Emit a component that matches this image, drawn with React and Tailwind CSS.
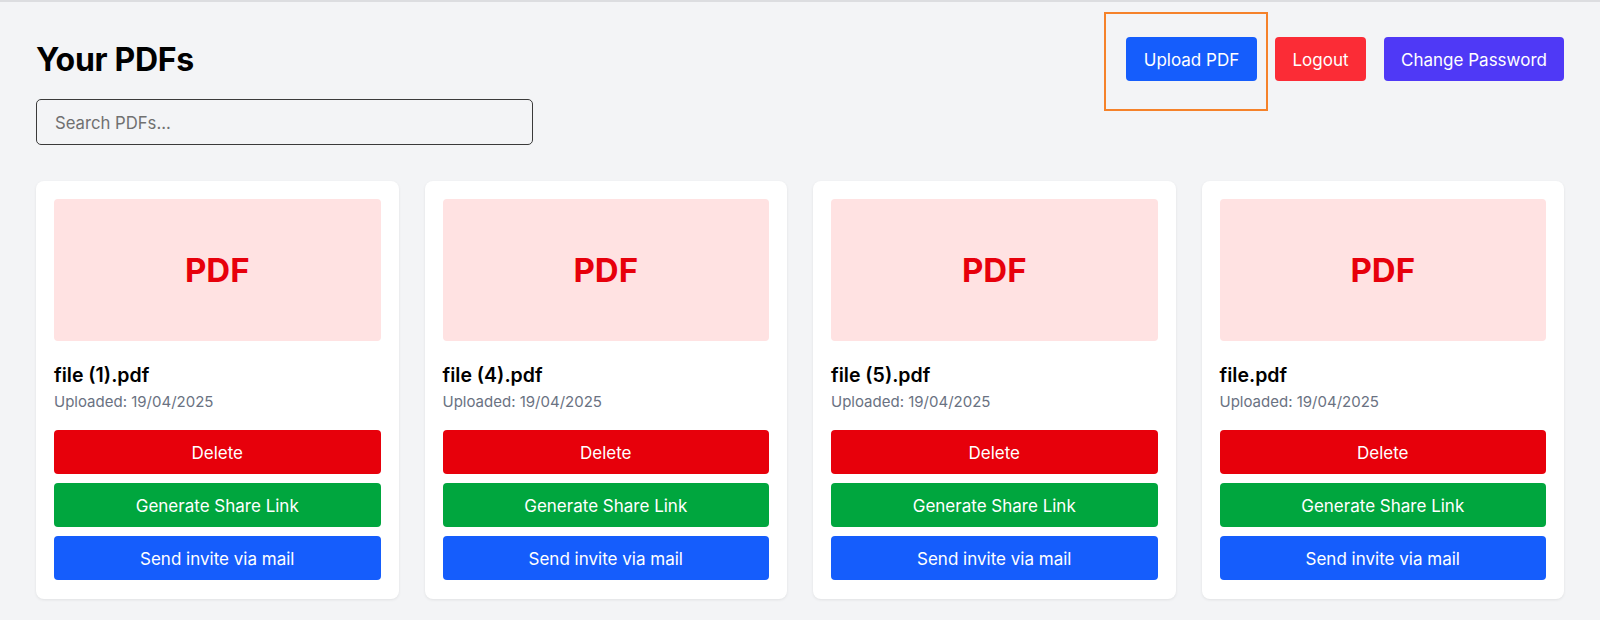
import React from "react";

const files = ["file (1).pdf", "file (4).pdf", "file (5).pdf", "file.pdf"];

function Card({ name }) {
  return (
    <div className="bg-white rounded-lg shadow-[0_1px_3px_rgba(0,0,0,0.08)] p-[18px] pb-[19px] flex flex-col">
      <div className="h-[142px] bg-[#ffe2e2] rounded-[4px] flex items-center justify-center">
        <span className="text-[33px] font-bold text-[#e7000b] leading-none">PDF</span>
      </div>
      <div className="mt-[22px] text-[19.5px] font-semibold text-black leading-[24px]">{name}</div>
      <div className="mt-[5px] text-[15px] text-[#6a7282] leading-[20px]">Uploaded: 19/04/2025</div>
      <div className="mt-[18px] flex flex-col gap-[9px]">
        <button className="h-[44px] pt-[3px] rounded-[4px] bg-[#e7000b] text-white text-[17px]">Delete</button>
        <button className="h-[44px] pt-[3px] rounded-[4px] bg-[#00a63e] text-white text-[17px]">Generate Share Link</button>
        <button className="h-[44px] pt-[3px] rounded-[4px] bg-[#155dfc] text-white text-[17px]">Send invite via mail</button>
      </div>
    </div>
  );
}

export default function App() {
  return (
    <div className="min-h-[620px] bg-[#f3f4f6] border-t-2 border-[#dcdde0] font-['Inter',sans-serif]">
      <div className="px-[36px] pt-[35px]">
        <div className="flex justify-between items-start">
          <div className="flex flex-col">
            <h1 className="mt-[3px] text-[32px] font-bold leading-[40px] text-black tracking-[-0.3px]">Your PDFs</h1>
            <input
              className="mt-[19px] w-[497px] h-[46px] pt-[2px] rounded-[5px] border border-[#3a3a3a] bg-transparent px-[18px] text-[16.7px] placeholder:text-[#707070] outline-none"
              placeholder="Search PDFs..."
            />
          </div>
          <div className="flex gap-[18px]">
            <div className="relative">
              <button className="h-[44px] w-[131px] pt-[3px] rounded-[4px] bg-[#155dfc] text-white text-[17px]">Upload PDF</button>
              <div className="absolute left-[-22px] top-[-25px] w-[164px] h-[99px] border-2 border-[#f5822a] pointer-events-none"></div>
            </div>
            <button className="h-[44px] w-[91px] pt-[3px] rounded-[4px] bg-[#fb2c36] text-white text-[17px]">Logout</button>
            <button className="h-[44px] w-[180px] pt-[3px] rounded-[4px] bg-[#4f39f6] text-white text-[17px]">Change Password</button>
          </div>
        </div>
        <div className="mt-[36px] grid grid-cols-4 gap-[26px]">
          {files.map((f) => (
            <Card key={f} name={f} />
          ))}
        </div>
      </div>
    </div>
  );
}
